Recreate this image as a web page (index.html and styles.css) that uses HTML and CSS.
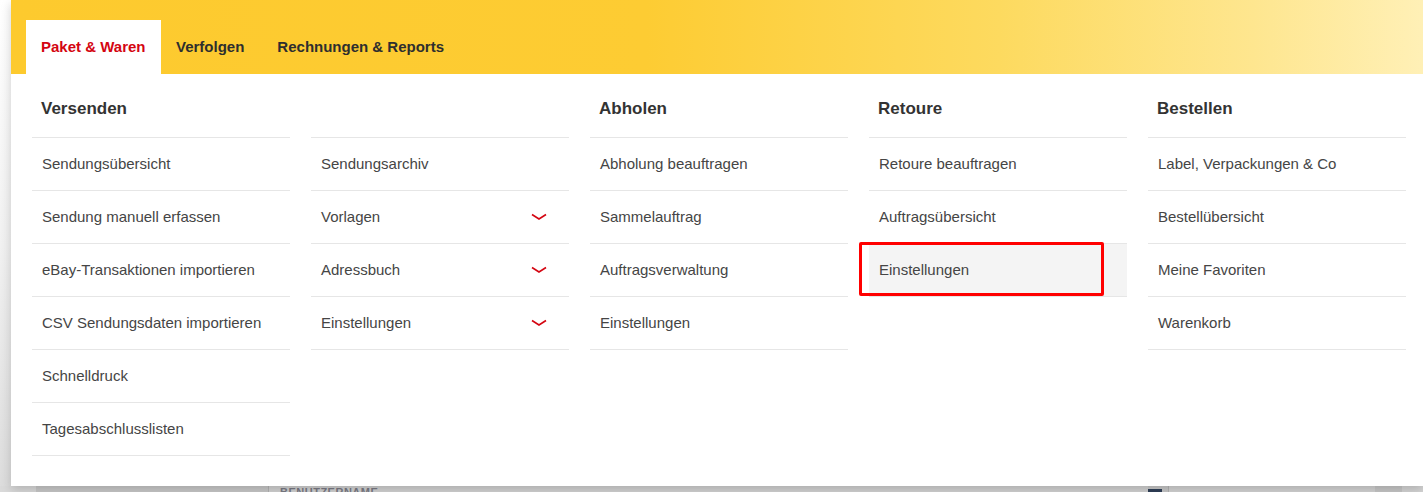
FILE: index.html
```html
<!DOCTYPE html>
<html lang="de">
  <head>
    <meta charset="UTF-8" />
    <title>Paket &amp; Waren</title>
    <link rel="stylesheet" href="styles.css">
  </head>
  <body>
    <div class="mega">
      <div class="tabbar">
        <div class="tab active">Paket &amp; Waren</div>
        <div class="tab track">Verfolgen</div>
        <div class="tab">Rechnungen &amp; Reports</div>
      </div>

      <div class="menu">
        <div class="column">
          <div class="column-title">Versenden</div>
          <div class="item">Sendungsübersicht</div>
          <div class="item">Sendung manuell erfassen</div>
          <div class="item">eBay-Transaktionen importieren</div>
          <div class="item">CSV Sendungsdaten importieren</div>
          <div class="item">Schnelldruck</div>
          <div class="item">Tagesabschlusslisten</div>
        </div>

        <div class="column">
          <div class="column-title"></div>
          <div class="item">Sendungsarchiv</div>
          <div class="item">Vorlagen
            <svg class="chevron" width="16" height="8" viewBox="0 0 16 8"><polyline points="1,1.5 8,6 15,1.5" /></svg>
          </div>
          <div class="item">Adressbuch
            <svg class="chevron" width="16" height="8" viewBox="0 0 16 8"><polyline points="1,1.5 8,6 15,1.5" /></svg>
          </div>
          <div class="item">Einstellungen
            <svg class="chevron" width="16" height="8" viewBox="0 0 16 8"><polyline points="1,1.5 8,6 15,1.5" /></svg>
          </div>
        </div>

        <div class="column">
          <div class="column-title">Abholen</div>
          <div class="item">Abholung beauftragen</div>
          <div class="item">Sammelauftrag</div>
          <div class="item">Auftragsverwaltung</div>
          <div class="item">Einstellungen</div>
        </div>

        <div class="column">
          <div class="column-title">Retoure</div>
          <div class="item">Retoure beauftragen</div>
          <div class="item">Auftragsübersicht</div>
          <div class="item hovered">Einstellungen<span class="marker"></span></div>
        </div>

        <div class="column">
          <div class="column-title">Bestellen</div>
          <div class="item">Label, Verpackungen &amp; Co</div>
          <div class="item">Bestellübersicht</div>
          <div class="item">Meine Favoriten</div>
          <div class="item">Warenkorb</div>
        </div>
      </div>
    </div>

    <!-- page behind the open menu -->
    <div class="behind">
      <div class="behind-a"></div>
      <div class="behind-b"></div>
      <div class="behind-c"><span>BENUTZERNAME</span></div>
      <div class="behind-d"><span class="icon"></span></div>
      <div class="behind-e"></div>
      <div class="behind-f"></div>
      <div class="behind-g"></div>
    </div>
  </body>
</html>
```

FILE: styles.css
```css
body {
  font-family: "Liberation Sans", Arial, sans-serif;
  background: linear-gradient(180deg, #ffffff 0%, #f1f1f1 50%, #dcdcdc 100%);
  margin: 0;
  padding: 0;
  height: 492px;
  overflow: hidden;
}

.mega {
  position: relative;
  z-index: 2;
  margin-left: 11px;
  height: 486px;
  background: white;
  box-shadow: 0 4px 10px rgba(0, 0, 0, 0.18);
}

.tabbar {
  display: flex;
  height: 74px;
  box-sizing: border-box;
  padding: 20px 0 0 15px;
  background: linear-gradient(
    90deg,
    #fdca2e 0%,
    #fdcc33 45%,
    #fdda5f 70%,
    #fee68f 88%,
    #fff0b6 100%
  );
}

.tab {
  padding: 0 15px;
  line-height: 54px;
  font-size: 15px;
  font-weight: 700;
  color: #2e2e2e;
}

.tab.active {
  width: 135px;
  box-sizing: border-box;
  background: white;
  color: #d40511;
}

.tab.track {
  padding-right: 18px;
}

.menu {
  display: grid;
  grid-template-columns: repeat(5, 258px);
  column-gap: 21px;
  padding-left: 21px;
}

.column-title {
  height: 64px;
  box-sizing: border-box;
  padding: 25px 0 0 9px;
  font-size: 17px;
  font-weight: 700;
  color: #333;
  border-bottom: 1px solid #e6e6e6;
}

.item {
  position: relative;
  display: flex;
  align-items: center;
  justify-content: space-between;
  height: 53px;
  box-sizing: border-box;
  padding: 0 22px 2px 10px;
  font-size: 15px;
  color: #454545;
  border-bottom: 1px solid #e6e6e6;
}

.chevron {
  margin-top: 2px;
}

.chevron polyline {
  fill: none;
  stroke: #d40511;
  stroke-width: 1.6;
}

.item.hovered {
  background: #f4f4f4;
}

.marker {
  position: absolute;
  left: -10px;
  top: -2px;
  width: 245px;
  height: 54px;
  box-sizing: border-box;
  border: 3px solid #f00;
  border-radius: 2px;
}

.behind {
  display: flex;
  height: 6px;
  overflow: hidden;
}

.behind div {
  height: 6px;
}

.behind-a {
  width: 36px;
  background: #dadada;
}

.behind-b {
  width: 232px;
  background: #c9c9c9;
  border-right: 1px solid #b4b4b4;
}

.behind-c {
  width: 879px;
  background: #d3d3d3;
}

.behind-c span {
  display: block;
  margin: 0 0 0 11px;
  font-size: 11px;
  font-weight: 700;
  line-height: 6px;
  padding-top: 3px;
  color: #7c7c86;
  letter-spacing: 0.5px;
}

.behind-d {
  width: 20px;
  background: #c9c9c9;
  border-right: 1px solid #b4b4b4;
}

.behind-d .icon {
  display: block;
  width: 14px;
  height: 3px;
  margin-top: 3px;
  background: #2f3f58;
}

.behind-e {
  width: 206px;
  background: #d4d4d4;
}

.behind-f {
  width: 27px;
  background: #c8c8c8;
}

.behind-g {
  flex: 1;
  background: #d6d6d6;
}
```
